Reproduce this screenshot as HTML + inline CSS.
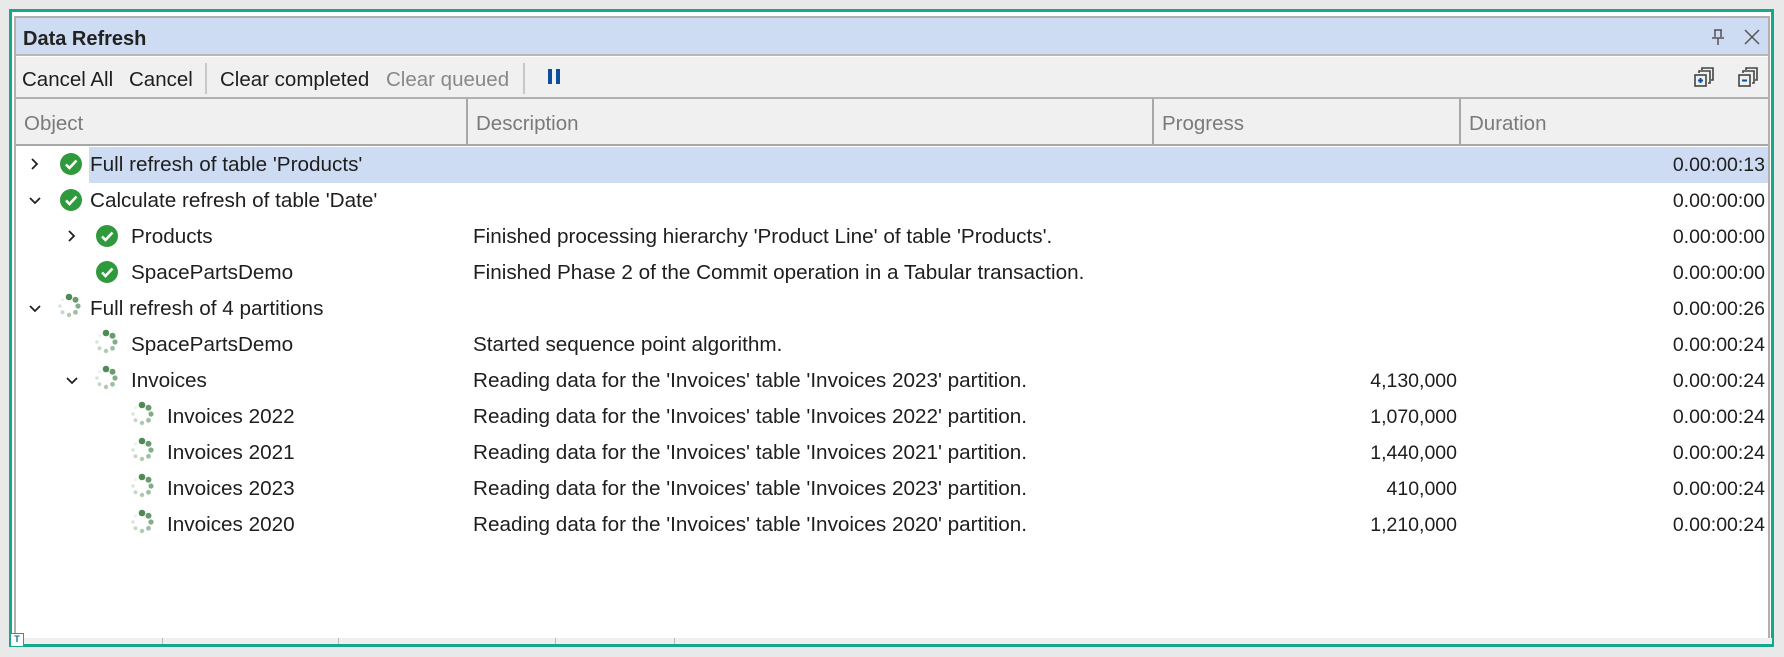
<!DOCTYPE html>
<html><head><meta charset="utf-8"><style>
*{margin:0;padding:0;box-sizing:border-box}
body{width:1784px;height:657px;background:#fff;position:relative;overflow:hidden;font-family:"Liberation Sans",sans-serif;color:#1e1e1e}
.a{position:absolute;white-space:nowrap}
.t{font-size:20.7px;line-height:36px;height:36px}
.n{font-size:19.5px;line-height:36px;height:36px}
.g{color:#7a7a7a}
.tb{font-size:20.5px;line-height:34px}
</style></head><body>
<div class="a" style="left:0;top:0;width:1784px;height:657px;background:#e9e9e9"></div>
<div class="a" style="left:9px;top:9px;width:1765px;height:638px;border:3px solid #15a88a;background:#fff"></div>
<div class="a" style="left:14px;top:16px;width:1756px;height:624px;border:2px solid #b0b0b0;background:#fff"></div>
<!-- title -->
<div class="a" style="left:16px;top:18px;width:1752px;height:38px;background:#cddcf3;border-bottom:2px solid #b8b8b8"></div>
<div class="a" style="left:23px;top:24px;font-size:20px;font-weight:bold;line-height:30px;color:#222">Data Refresh</div>
<svg class="a" style="left:1708px;top:27px" width="20" height="20" viewBox="0 0 20 20"><path d="M6 3h8M7 3v7M13 3v7M4 11h12M10 11v7" stroke="#555" stroke-width="1.5" fill="none"/></svg>
<svg class="a" style="left:1742px;top:27px" width="20" height="20" viewBox="0 0 20 20"><path d="M3 3l14 14M17 3L3 17" stroke="#555" stroke-width="1.5"/></svg>
<!-- toolbar -->
<div class="a" style="left:16px;top:57px;width:1752px;height:42px;background:#f0f0f0;border-bottom:2px solid #b0b0b0"></div>
<div class="a tb" style="left:22px;top:63px">Cancel All</div>
<div class="a tb" style="left:129px;top:63px">Cancel</div>
<div class="a" style="left:205px;top:63px;width:2px;height:31px;background:#c8c8c8"></div>
<div class="a tb" style="left:220px;top:63px">Clear completed</div>
<div class="a tb" style="left:386px;top:63px;color:#888">Clear queued</div>
<div class="a" style="left:523px;top:63px;width:2px;height:31px;background:#c8c8c8"></div>
<div class="a" style="left:548px;top:69px;width:4px;height:15px;background:#0c4f9c"></div>
<div class="a" style="left:556px;top:69px;width:4px;height:15px;background:#0c4f9c"></div>
<svg class="a" style="left:1693px;top:66px" width="22" height="22" viewBox="0 0 22 22" fill="none" stroke="#444" stroke-width="1.6"><path d="M9 4V2h11v12h-2M6 7V5h11v12h-2"/><rect x="2" y="9" width="11" height="11"/><path d="M5 14.5h5M7.5 12v5" stroke="#0c4f9c" stroke-width="2"/></svg>
<svg class="a" style="left:1737px;top:66px" width="22" height="22" viewBox="0 0 22 22" fill="none" stroke="#444" stroke-width="1.6"><path d="M9 4V2h11v12h-2M6 7V5h11v12h-2"/><rect x="2" y="9" width="11" height="11"/><path d="M5 14.5h5" stroke="#0c4f9c" stroke-width="2"/></svg>
<!-- header -->
<div class="a" style="left:16px;top:99px;width:1752px;height:47px;background:#f0f0f0;border-bottom:2px solid #a8a8a8"></div>
<div class="a" style="left:466px;top:99px;width:2px;height:46px;background:#a8a8a8"></div>
<div class="a" style="left:1152px;top:99px;width:2px;height:46px;background:#a8a8a8"></div>
<div class="a" style="left:1459px;top:99px;width:2px;height:46px;background:#a8a8a8"></div>
<div class="a g tb" style="left:24px;top:107px">Object</div>
<div class="a g tb" style="left:476px;top:107px">Description</div>
<div class="a g tb" style="left:1162px;top:107px">Progress</div>
<div class="a g tb" style="left:1469px;top:107px">Duration</div>
<!-- highlight -->
<div class="a" style="left:89px;top:147px;width:1679px;height:36px;background:#cddcf3"></div>
<svg width="0" height="0" style="position:absolute"><defs>
<g id="ok"><circle cx="11" cy="11" r="11" fill="#2e9a3c"/><path d="M6 11.5l3.5 3.5 7-7.5" stroke="#fff" stroke-width="2.6" fill="none"/></g>
<g id="sp" fill="#4f8a55"><circle cx="13" cy="4" r="3.3"/><circle cx="19.5" cy="6.8" r="3" opacity=".85"/><circle cx="22" cy="13" r="2.6" opacity=".7"/><circle cx="19.5" cy="19.3" r="2.4" opacity=".55"/><circle cx="13" cy="22" r="2.2" opacity=".45"/><circle cx="6.5" cy="19.3" r="2" opacity=".32"/><circle cx="4" cy="13" r="1.8" opacity=".22"/><circle cx="6.5" cy="6.8" r="1.5" opacity=".12"/></g>
<path id="cr" d="M2 1l5 5-5 5" stroke="#222" stroke-width="1.8" fill="none"/>
<path id="cd" d="M1 2l5 5 5-5" stroke="#222" stroke-width="1.8" fill="none"/>
</defs></svg>
<!-- rows -->
<svg class="a" style="left:30px;top:158px" width="12" height="12"><use href="#cr"/></svg>
<svg class="a" style="left:60px;top:153px" width="22" height="22"><use href="#ok"/></svg>
<div class="a t" style="left:90px;top:147px">Full refresh of table 'Products'</div>
<div class="a n" style="right:19px;top:147px">0.00:00:13</div>

<svg class="a" style="left:29px;top:196px" width="12" height="12"><use href="#cd"/></svg>
<svg class="a" style="left:60px;top:189px" width="22" height="22"><use href="#ok"/></svg>
<div class="a t" style="left:90px;top:183px">Calculate refresh of table 'Date'</div>
<div class="a n" style="right:19px;top:183px">0.00:00:00</div>

<svg class="a" style="left:67px;top:230px" width="12" height="12"><use href="#cr"/></svg>
<svg class="a" style="left:96px;top:225px" width="22" height="22"><use href="#ok"/></svg>
<div class="a t" style="left:131px;top:219px">Products</div>
<div class="a t" style="left:473px;top:219px">Finished processing hierarchy 'Product Line' of table 'Products'.</div>
<div class="a n" style="right:19px;top:219px">0.00:00:00</div>

<svg class="a" style="left:96px;top:261px" width="22" height="22"><use href="#ok"/></svg>
<div class="a t" style="left:131px;top:255px">SpacePartsDemo</div>
<div class="a t" style="left:473px;top:255px">Finished Phase 2 of the Commit operation in a Tabular transaction.</div>
<div class="a n" style="right:19px;top:255px">0.00:00:00</div>

<svg class="a" style="left:29px;top:304px" width="12" height="12"><use href="#cd"/></svg>
<svg class="a" style="left:56px;top:293px" width="26" height="26"><use href="#sp"/></svg>
<div class="a t" style="left:90px;top:291px">Full refresh of 4 partitions</div>
<div class="a n" style="right:19px;top:291px">0.00:00:26</div>

<svg class="a" style="left:93px;top:329px" width="26" height="26"><use href="#sp"/></svg>
<div class="a t" style="left:131px;top:327px">SpacePartsDemo</div>
<div class="a t" style="left:473px;top:327px">Started sequence point algorithm.</div>
<div class="a n" style="right:19px;top:327px">0.00:00:24</div>

<svg class="a" style="left:66px;top:376px" width="12" height="12"><use href="#cd"/></svg>
<svg class="a" style="left:93px;top:365px" width="26" height="26"><use href="#sp"/></svg>
<div class="a t" style="left:131px;top:363px">Invoices</div>
<div class="a t" style="left:473px;top:363px">Reading data for the 'Invoices' table 'Invoices 2023' partition.</div>
<div class="a n" style="right:327px;top:363px">4,130,000</div>
<div class="a n" style="right:19px;top:363px">0.00:00:24</div>

<svg class="a" style="left:129px;top:401px" width="26" height="26"><use href="#sp"/></svg>
<div class="a t" style="left:167px;top:399px">Invoices 2022</div>
<div class="a t" style="left:473px;top:399px">Reading data for the 'Invoices' table 'Invoices 2022' partition.</div>
<div class="a n" style="right:327px;top:399px">1,070,000</div>
<div class="a n" style="right:19px;top:399px">0.00:00:24</div>

<svg class="a" style="left:129px;top:437px" width="26" height="26"><use href="#sp"/></svg>
<div class="a t" style="left:167px;top:435px">Invoices 2021</div>
<div class="a t" style="left:473px;top:435px">Reading data for the 'Invoices' table 'Invoices 2021' partition.</div>
<div class="a n" style="right:327px;top:435px">1,440,000</div>
<div class="a n" style="right:19px;top:435px">0.00:00:24</div>

<svg class="a" style="left:129px;top:473px" width="26" height="26"><use href="#sp"/></svg>
<div class="a t" style="left:167px;top:471px">Invoices 2023</div>
<div class="a t" style="left:473px;top:471px">Reading data for the 'Invoices' table 'Invoices 2023' partition.</div>
<div class="a n" style="right:327px;top:471px">410,000</div>
<div class="a n" style="right:19px;top:471px">0.00:00:24</div>

<svg class="a" style="left:129px;top:509px" width="26" height="26"><use href="#sp"/></svg>
<div class="a t" style="left:167px;top:507px">Invoices 2020</div>
<div class="a t" style="left:473px;top:507px">Reading data for the 'Invoices' table 'Invoices 2020' partition.</div>
<div class="a n" style="right:327px;top:507px">1,210,000</div>
<div class="a n" style="right:19px;top:507px">0.00:00:24</div>
<!-- bottom strip -->
<div class="a" style="left:16px;top:638px;width:1756px;height:6px;background:#efefef"></div>
<div class="a" style="left:162px;top:638px;width:1px;height:6px;background:#bbb"></div>
<div class="a" style="left:338px;top:638px;width:1px;height:6px;background:#bbb"></div>
<div class="a" style="left:555px;top:638px;width:1px;height:6px;background:#bbb"></div>
<div class="a" style="left:674px;top:638px;width:1px;height:6px;background:#bbb"></div>
<div class="a" style="left:10px;top:633px;width:14px;height:14px;background:#fff;border:1.5px solid #15a88a;font-size:9px;line-height:11px;text-align:center;color:#0c6e8e;font-weight:bold">T</div>
</body></html>
